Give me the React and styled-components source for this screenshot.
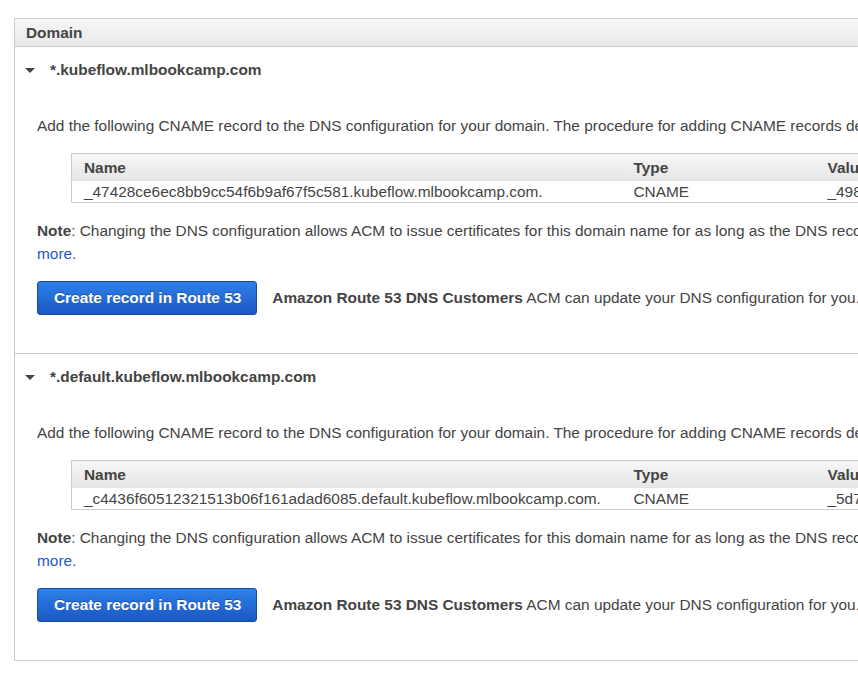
import styled, { createGlobalStyle } from "styled-components";

const GlobalStyle = createGlobalStyle`
  body {
    margin: 0;
    padding: 18px 0 0 14px;
    overflow: hidden;
    background: #fff;
    font-family: "Liberation Sans", Arial, sans-serif;
    color: #444;
  }
`;

const domains = [
  {
    domain: "*.kubeflow.mlbookcamp.com",
    name: "_47428ce6ec8bb9cc54f6b9af67f5c581.kubeflow.mlbookcamp.com.",
    value: "_498a1c0e27f3b0f1d4e2c7a5b6d8e9f0.olprtlswtu.acm-validations.aws.",
  },
  {
    domain: "*.default.kubeflow.mlbookcamp.com",
    name: "_c4436f60512321513b06f161adad6085.default.kubeflow.mlbookcamp.com.",
    value: "_5d7e2a9c4b1f3e6d8a0c2b4e6f8a1c3d.olprtlswtu.acm-validations.aws.",
  },
];

const Panel = styled.div`
  width: 1450px;
  border: 1px solid #ccc;
`;

const PanelHeader = styled.div`
  height: 27px;
  padding: 0 11px;
  display: flex;
  align-items: center;
  background: linear-gradient(#f6f6f6, #e9e9e9);
  border-bottom: 1px solid #ccc;
  font-size: 15.4px;
  font-weight: bold;
  color: #444;
`;

const Section = styled.div`
  height: ${p => (p.first ? 306 : 307)}px;
  box-sizing: border-box;
  border-top: ${p => (p.first ? "none" : "1px solid #ccc")};
  padding: 12px 0 0 9px;
`;

const Title = styled.div`
  display: flex;
  align-items: center;
  gap: 15px;
  height: 22px;
  font-size: 15.4px;
  font-weight: bold;
  color: #444;
`;

const Caret = styled.span`
  width: 0;
  height: 0;
  margin-left: 1px;
  border-left: 5px solid transparent;
  border-right: 5px solid transparent;
  border-top: 5px solid #444;
`;

const Body = styled.div`
  padding: 33px 0 0 13px;
  font-size: 15.4px;
  line-height: 23px;
  color: #444;
`;

const Text = styled.p`
  margin: 0;
  white-space: nowrap;
`;

const Table = styled.table`
  width: 1350px;
  table-layout: fixed;
  margin: 16px 0 16px 34px;
  border-collapse: collapse;
  border-left: 1px solid #ccc;
  border-top: 1px solid #ccc;
  border-bottom: 1px solid #ccc;
  font-size: 15.4px;
  color: #444;
  th {
    height: 26px;
    padding: 0 12px;
    text-align: left;
    font-weight: bold;
    background: linear-gradient(#f6f6f6, #e6e6e6);
    border-bottom: 1px solid #e2e2e2;
  }
  td {
    height: 21px;
    padding: 0 12px;
    line-height: 21px;
    white-space: nowrap;
    overflow: hidden;
  }
`;

const Col = styled.col`
  width: ${p => p.w};
`;

const Link = styled.a`
  color: #1f5bc6;
  text-decoration: none;
`;

const Actions = styled.div`
  display: flex;
  align-items: center;
  gap: 15px;
  margin-top: 16px;
`;

const Button = styled.button`
  height: 34px;
  padding: 0 15px 0 16px;
  border: 1px solid #1a4a9c;
  border-radius: 3px;
  background: linear-gradient(#2e80ea, #1b57c2);
  color: #fff;
  font-family: "Liberation Sans", Arial, sans-serif;
  font-size: 15.4px;
  font-weight: bold;
  text-shadow: 0 -1px 0 rgba(0, 0, 0, 0.25);
  cursor: pointer;
`;

const Hint = styled.span`
  font-size: 15.4px;
  line-height: 20px;
  white-space: nowrap;
  margin-top: -1px;
`;

const DomainSection = ({ item, first }) => (
  <Section first={first}>
    <Title>
      <Caret />
      {item.domain}
    </Title>
    <Body>
      <Text>
        Add the following CNAME record to the DNS configuration for your domain. The procedure for
        adding CNAME records depends on your DNS service Provider. <Link href="#">Learn more.</Link>
      </Text>
      <Table>
        <colgroup>
          <Col w="550px" />
          <Col w="194px" />
          <Col w="auto" />
        </colgroup>
        <thead>
          <tr>
            <th>Name</th>
            <th>Type</th>
            <th>Value</th>
          </tr>
        </thead>
        <tbody>
          <tr>
            <td>{item.name}</td>
            <td>CNAME</td>
            <td>{item.value}</td>
          </tr>
        </tbody>
      </Table>
      <Text>
        <b>Note</b>: Changing the DNS configuration allows ACM to issue certificates for this domain
        name for as long as the DNS record exists. You can revoke permission at any time by removing
        the record. <Link href="#">Learn<br />more.</Link>
      </Text>
      <Actions>
        <Button>Create record in Route 53</Button>
        <Hint>
          <b>Amazon Route 53 DNS Customers</b> ACM can update your DNS configuration for you.
        </Hint>
      </Actions>
    </Body>
  </Section>
);

export default function App() {
  return (
    <>
      <GlobalStyle />
      <Panel>
        <PanelHeader>Domain</PanelHeader>
        {domains.map((d, i) => (
          <DomainSection key={d.domain} item={d} first={i === 0} />
        ))}
      </Panel>
    </>
  );
}
